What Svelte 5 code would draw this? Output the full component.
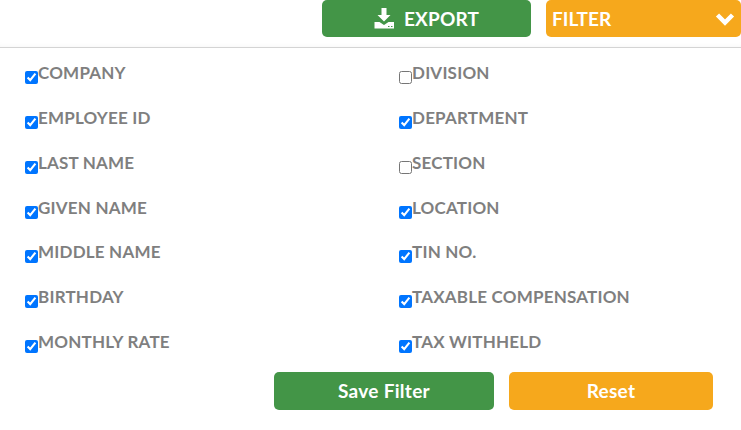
<script>
  const left = [
    { name: "COMPANY", on: true },
    { name: "EMPLOYEE ID", on: true },
    { name: "LAST NAME", on: true },
    { name: "GIVEN NAME", on: true },
    { name: "MIDDLE NAME", on: true },
    { name: "BIRTHDAY", on: true },
    { name: "MONTHLY RATE", on: true },
  ];
  const right = [
    { name: "DIVISION", on: false },
    { name: "DEPARTMENT", on: true },
    { name: "SECTION", on: false },
    { name: "LOCATION", on: true },
    { name: "TIN NO.", on: true },
    { name: "TAXABLE COMPENSATION", on: true },
    { name: "TAX WITHHELD", on: true },
  ];
  // read across the two columns
  const fields = left.flatMap((f, i) => [f, right[i]]);
</script>

<div class="page">
  <header class="top">
    <button class="btn green export">
      <svg width="21" height="22" viewBox="0 0 21 22">
        <path d="M7.500 0h5v7h4L10 13.500 3.500 7h4z" fill="#fff" />
        <path d="M0.500 14h5l4.500 3 4.500-3h5.500v6.500H0.500z" fill="#fff" />
        <path d="M14 18.500h1.500M17 18.500h1.500" stroke="#439547" stroke-width="1" />
      </svg>
      EXPORT
    </button>
    <button class="btn orange filter">
      <span>FILTER</span>
      <svg width="20" height="14" viewBox="0 0 20 14">
        <path d="M2.500 3 10 10.500 17.500 3" fill="none" stroke="#fff" stroke-width="4.500" />
      </svg>
    </button>
  </header>

  <div class="grid">
    {#each fields as f}
      <label class="field">
        <input type="checkbox" checked={f.on} />
        <span>{f.name}</span>
      </label>
    {/each}
  </div>

  <footer class="actions">
    <button class="btn green save">Save Filter</button>
    <button class="btn orange reset">Reset</button>
  </footer>
</div>

<style>
  :global(body) {
    margin: 0;
    background: #fff;
  }
  .page {
    width: 741px;
    height: 430px;
    overflow: hidden;
    font-family: Lato, "Open Sans", sans-serif;
  }
  .top {
    display: flex;
    justify-content: flex-end;
    gap: 15px;
    height: 47px;
    border-bottom: 1px solid #d4d4d4;
    box-shadow: inset 0 -6px 6px -6px #f4f4f4;
  }
  .btn {
    border: 0;
    border-radius: 5px;
    color: #fff;
    font-family: inherit;
    font-weight: 700;
    padding: 0;
    display: flex;
    align-items: center;
  }
  .green {
    background: #439547;
  }
  .orange {
    background: #f6a81c;
  }
  .export {
    width: 209px;
    height: 37px;
    justify-content: center;
    gap: 9px;
    font-size: 19px;
    letter-spacing: 0.2px;
  }
  .filter {
    width: 195px;
    height: 37px;
    justify-content: space-between;
    padding: 0 6px;
    font-size: 19px;
    box-sizing: border-box;
  }
  .grid {
    display: grid;
    grid-template-columns: 374px 1fr;
    grid-auto-rows: 44.8px;
    padding: 15.2px 0 0 25px;
    height: 308.8px;
  }
  .field {
    display: flex;
    align-items: flex-start;
    color: #7f7f7f;
    font-size: 17px;
    font-weight: 700;
    letter-spacing: 0.2px;
    line-height: 19px;
  }
  .field input {
    width: 13px;
    height: 13px;
    margin: 8px 0 0;
  }
  .actions {
    display: flex;
    gap: 15px;
    padding-left: 274px;
  }
  .save,
  .reset {
    height: 38px;
    justify-content: center;
    font-size: 19px;
    letter-spacing: 0.3px;
  }
  .save {
    width: 220px;
  }
  .reset {
    width: 204px;
  }
</style>
